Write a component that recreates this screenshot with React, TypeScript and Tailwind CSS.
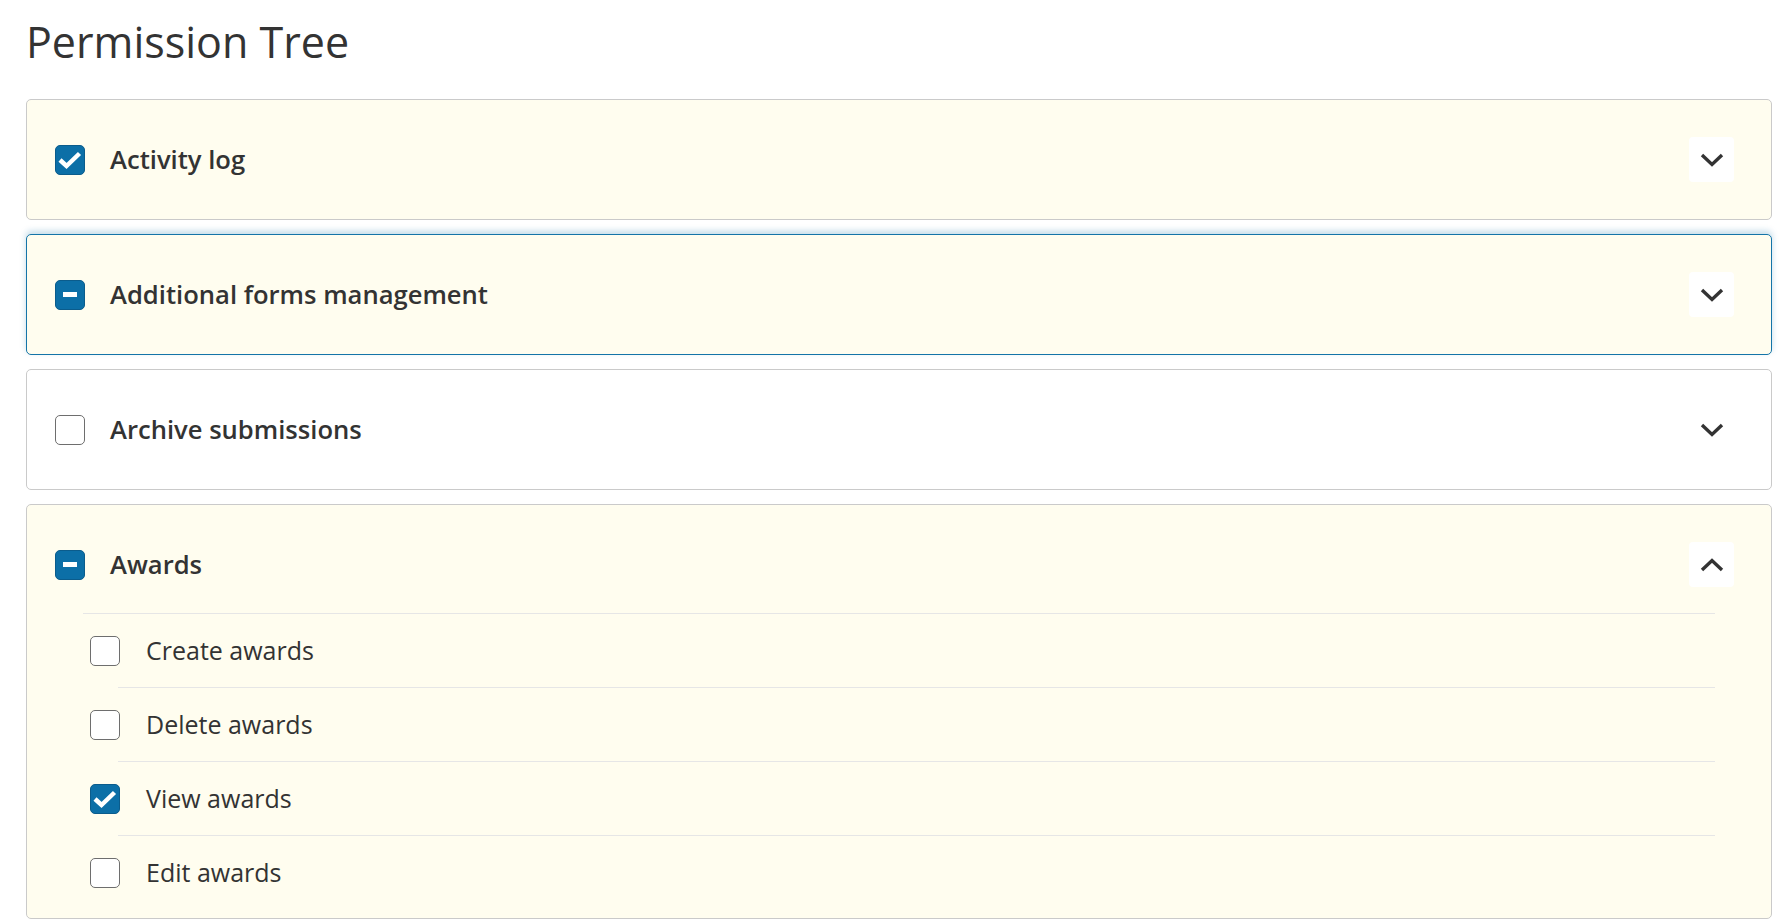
import { useState, type FC } from 'react'

type CheckState = 'checked' | 'unchecked' | 'mixed'

interface CheckboxProps {
  state: CheckState
}

const Checkbox: FC<CheckboxProps> = ({ state }) => {
  if (state === 'unchecked') {
    return <span className="block w-[30px] h-[30px] shrink-0 rounded-[5px] border border-[#6e6e6e] bg-white" />
  }
  return (
    <span className="flex items-center justify-center w-[30px] h-[30px] shrink-0 rounded-[5px] border border-[#0b5c8c] bg-[#0c6fa7]">
      {state === 'checked' ? (
        <svg width="30" height="30" viewBox="0 0 30 30" fill="none" className="-m-px">
          <path d="M5 15 L11.5 21 L24.5 8.5" stroke="white" strokeWidth="4.5" />
        </svg>
      ) : (
        <span className="block w-[14px] h-[5px] bg-white" />
      )}
    </span>
  )
}

const Chevron: FC<{ up?: boolean }> = ({ up }) => (
  <svg width="24" height="14" viewBox="0 0 24 14" fill="none" className={up ? 'rotate-180' : ''}>
    <path d="M2 2 L12 11.5 L22 2" stroke="#333333" strokeWidth="3.4" />
  </svg>
)

interface Permission {
  name: string
  state: CheckState
  focused?: boolean
  children?: { name: string; checked: boolean }[]
}

const permissions: Permission[] = [
  { name: 'Activity log', state: 'checked' },
  { name: 'Additional forms management', state: 'mixed', focused: true },
  { name: 'Archive submissions', state: 'unchecked' },
  {
    name: 'Awards',
    state: 'mixed',
    children: [
      { name: 'Create awards', checked: false },
      { name: 'Delete awards', checked: false },
      { name: 'View awards', checked: true },
      { name: 'Edit awards', checked: false }
    ]
  }
]

const PermissionCard: FC<{ item: Permission }> = ({ item }) => {
  const [open, setOpen] = useState(!!item.children)
  const highlighted = item.state !== 'unchecked'

  return (
    <div
      className={`rounded-[5px] border ${highlighted ? 'bg-[#fffdef]' : 'bg-white'} ${
        item.focused
          ? 'border-[#1474a8] shadow-[0_-3px_6px_rgba(20,116,168,0.25)]'
          : 'border-[#cacaca]'
      }`}
    >
      {/* Заголовок */}
      <div className={`flex items-center pl-[28px] pr-[37px] ${open ? 'pt-[37px] pb-[26px]' : 'h-[119px]'}`}>
        <Checkbox state={item.state} />
        <span className="ml-[25px] flex-1 text-[25.6px] font-semibold text-[#333333] leading-none">{item.name}</span>
        <button
          onClick={() => setOpen(!open)}
          className="flex items-center justify-center w-[45px] h-[45px] rounded-[4px] bg-white"
        >
          <Chevron up={open} />
        </button>
      </div>

      {/* Дочерние права */}
      {open && item.children && (
        <div className="ml-[56px] mr-[56px] border-t border-[#e6e6e6] pb-[9px]">
          {item.children.map((child, i) => (
            <div key={child.name}>
              {i > 0 && <div className="ml-[35px] h-px bg-[#e6e6e6]" />}
              <div className="flex items-center h-[73px] pl-[7px]">
                <Checkbox state={child.checked ? 'checked' : 'unchecked'} />
                <span className="ml-[26px] text-[25px] text-[#333333] leading-none">{child.name}</span>
              </div>
            </div>
          ))}
        </div>
      )}
    </div>
  )
}

export default function App() {
  return (
    <div className="min-h-screen bg-white pl-[26px] pr-[10px] font-['Open_Sans',sans-serif]">
      <h1 className="pt-[20px] mb-[36px] text-[43px] font-normal leading-none text-[#333333]">Permission Tree</h1>
      <div className="flex flex-col gap-[14px]">
        {permissions.map((p) => (
          <PermissionCard key={p.name} item={p} />
        ))}
      </div>
    </div>
  )
}
